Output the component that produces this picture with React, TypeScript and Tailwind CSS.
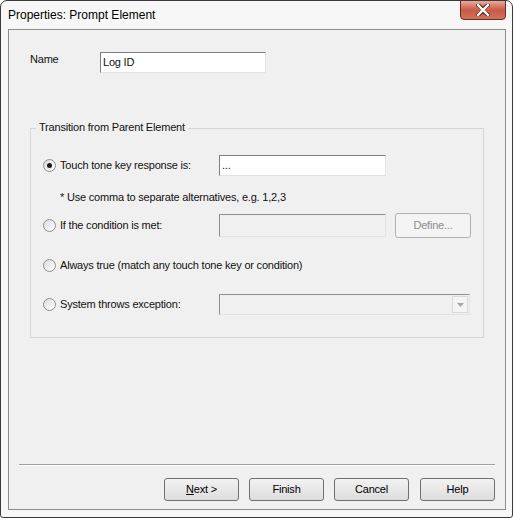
import React from "react"

const font = { fontFamily: "'Liberation Sans', Arial, sans-serif" }

// Win7 style radio button
const Radio = ({ checked }: { checked?: boolean }): JSX.Element => {
  return (
    <div className="w-[13px] h-[13px] rounded-full border border-[#8f8f8f] bg-gradient-to-br from-[#dcdcdc] to-[#ffffff] flex items-center justify-center shrink-0">
      {checked && <div className="w-[5px] h-[5px] rounded-full bg-[#1b1b1b]" />}
    </div>
  )
}

const Button = ({
  children,
  disabled,
  className,
}: {
  children: React.ReactNode
  disabled?: boolean
  className?: string
}): JSX.Element => {
  return (
    <div
      className={`flex items-center justify-center rounded-[3px] border ${
        disabled
          ? "border-[#adb2b5] bg-[#f4f4f4] text-[#8d8d8d]"
          : "border-[#707070] bg-gradient-to-b from-[#f2f2f2] to-[#dddddd] text-black"
      } ${className ?? ""}`}
    >
      {children}
    </div>
  )
}

const App = (): JSX.Element => {
  return (
    <div
      className="w-[513px] h-[518px] border border-[#3a3a3a] rounded-t-[7px] rounded-b-[3px] bg-[#f7f7f7] flex flex-col text-[11px] tracking-[-0.2px] text-[#111] overflow-hidden"
      style={font}
    >
      {/* Title bar */}
      <div className="h-[28px] shrink-0 flex items-start justify-between pl-[7px]">
        <div className="text-[12px] tracking-normal text-black mt-[7px] leading-[15px]">Properties: Prompt Element</div>
        <div className="w-[46px] h-[20px] mr-[6px] -mt-px rounded-b-[4px] border border-[#6b2a22] bg-gradient-to-b from-[#e9a99c] via-[#c75a45] to-[#d2735c] flex items-center justify-center">
          <svg width="14" height="12" viewBox="0 0 14 12">
            <path
              d="M2 1 L7 5 L12 1 M2 11 L7 7 L12 11"
              stroke="#5a2a22"
              strokeWidth="4"
              fill="none"
              strokeLinecap="round"
            />
            <path
              d="M2 1 L12 11 M12 1 L2 11"
              stroke="#ffffff"
              strokeWidth="2.4"
              fill="none"
              strokeLinecap="round"
            />
          </svg>
        </div>
      </div>

      {/* Content */}
      <div className="flex-1 ml-[7px] mr-[6px] mb-[7px] border border-[#8c8c8c] bg-[#f0f0f0] flex flex-col">
        {/* Name row */}
        <div className="flex items-start mt-[22px] pl-[21px]">
          <div className="w-[70px] leading-[13px] mt-[1px]">Name</div>
          <div className="w-[166px] h-[21px] bg-white border border-t-[#7f7f7f] border-l-[#7f7f7f] border-r-[#e3e3e3] border-b-[#e3e3e3] px-[2px] flex items-center">
            Log ID
          </div>
        </div>

        {/* Group box */}
        <div className="relative ml-[21px] mt-[55px] w-[454px] h-[210px] border border-[#d5d5d5] flex flex-col">
          <span className="absolute -top-[8px] left-[5px] px-[3px] bg-[#f0f0f0] leading-[13px]">
            Transition from Parent Element
          </span>

          {/* Touch tone */}
          <div className="flex items-center h-[21px] mt-[26px] pl-[12px]">
            <Radio checked />
            <div className="w-[163px] pl-[4px]">Touch tone key response is:</div>
            <div className="w-[167px] h-[21px] bg-white border border-t-[#7f7f7f] border-l-[#7f7f7f] border-r-[#e3e3e3] border-b-[#e3e3e3] px-[2px] flex items-center">
              ...
            </div>
          </div>
          <div className="mt-[15px] pl-[29px] leading-[13px]">* Use comma to separate alternatives, e.g. 1,2,3</div>

          {/* Condition */}
          <div className="flex items-center h-[25px] mt-[9px] pl-[12px]">
            <Radio />
            <div className="w-[163px] pl-[4px]">If the condition is met:</div>
            <div className="w-[167px] h-[23px] bg-[#f0f0f0] border border-t-[#8f8f8f] border-l-[#8f8f8f] border-r-[#e3e3e3] border-b-[#e3e3e3]" />
            <Button disabled className="w-[76px] h-[25px] ml-[9px]">
              Define...
            </Button>
          </div>

          {/* Always true */}
          <div className="flex items-center h-[13px] mt-[21px] pl-[12px]">
            <Radio />
            <div className="pl-[4px]">Always true (match any touch tone key or condition)</div>
          </div>

          {/* Exception */}
          <div className="flex items-center h-[21px] mt-[22px] pl-[12px]">
            <Radio />
            <div className="w-[163px] pl-[4px]">System throws exception:</div>
            <div className="w-[251px] h-[21px] bg-[#f0f0f0] border border-t-[#8f8f8f] border-l-[#8f8f8f] border-r-[#e3e3e3] border-b-[#e3e3e3] flex items-center justify-end pr-[1px]">
              <div className="w-[16px] h-[17px] border border-[#d9d9d9] bg-[#f4f4f4] flex items-center justify-center">
                <svg width="7" height="4" viewBox="0 0 7 4">
                  <path d="M0 0 L7 0 L3.5 4 Z" fill="#a8a8a8" />
                </svg>
              </div>
            </div>
          </div>
        </div>

        <div className="flex-1" />

        {/* Separator */}
        <div className="mx-[10px] border-t border-[#a0a0a0] border-b border-b-white" />

        {/* Buttons */}
        <div className="flex justify-end gap-[10px] mt-[12px] mb-[8px] mr-[10px]">
          <Button className="w-[75px] h-[23px]">
            <span>
              <span className="underline">N</span>ext &gt;
            </span>
          </Button>
          <Button className="w-[75px] h-[23px]">Finish</Button>
          <Button className="w-[75px] h-[23px]">Cancel</Button>
          <Button className="w-[75px] h-[23px] ml-px">Help</Button>
        </div>
      </div>
    </div>
  )
}

export default App
